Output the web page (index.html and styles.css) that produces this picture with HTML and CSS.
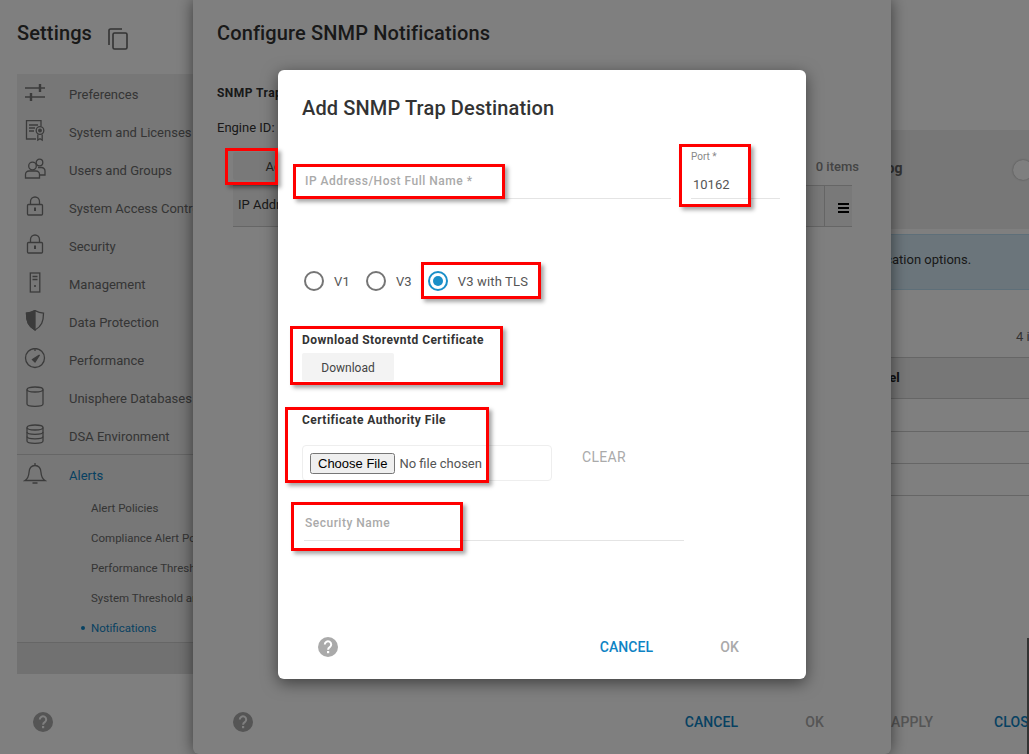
FILE: index.html
```html
<!DOCTYPE html>
<html>
<head>
	<meta charset="UTF-8">
	<title>Settings</title>
	<link rel="stylesheet" href="styles.css">
</head>
<body>
	<div class="page">
		<aside class="side">
			<div class="sideHead">
				<h1>Settings</h1>
				<svg class="copyIcon" viewBox="0 0 24 24" fill="none" stroke="currentColor" stroke-width="1.6"><path d="M3 19V4.5A1.5 1.5 0 0 1 4.500 3H16"/><rect x="7" y="7" width="14" height="16" rx="1.500"/></svg>
			</div>
			<nav class="sideNav">
				<div class="navRow">
					<svg class="navIcon" viewBox="0 0 24 24" fill="none" stroke="currentColor" stroke-width="1.300"><path d="M2 6h20M2 15h20"/><path d="M17 2v8M8 11v8" stroke-width="2.400"/></svg>
					<span>Preferences</span>
				</div>
				<div class="navRow">
					<svg class="navIcon" viewBox="0 0 24 24" fill="none" stroke="currentColor" stroke-width="1.300"><path d="M13 19H3.500V.700H18V6"/><path d="M6 5h9M6 8h6M6 11h5"/><circle cx="17" cy="10.500" r="3.800"/><circle cx="17" cy="10.500" r="1.300" fill="currentColor"/><path d="M14.800 14.500v5.500l2.200-1.300 2.200 1.300v-5.500"/></svg>
					<span>System and Licenses</span>
				</div>
				<div class="navRow">
					<svg class="navIcon" viewBox="0 0 24 24" fill="none" stroke="currentColor" stroke-width="1.300"><circle cx="9.500" cy="8" r="3.800"/><circle cx="16.500" cy="4.500" r="3.300"/><path d="M2.500 20v-3.500a3.500 3.500 0 0 1 3.500-3.500h7a3.500 3.500 0 0 1 3.500 3.500V20z"/><path d="M15 9.500h3.500a3.500 3.500 0 0 1 3.500 3.500v4h-5.500"/></svg>
					<span>Users and Groups</span>
				</div>
				<div class="navRow">
					<svg class="navIcon" viewBox="0 0 24 24" fill="none" stroke="currentColor" stroke-width="1.300"><rect x="4.500" y="8.500" width="15" height="10.500" rx="1"/><path d="M7.500 8.500V5.500a4.500 4.500 0 0 1 9 0V8.500"/><path d="M12 11.500v3.500" stroke-width="2"/></svg>
					<span>System Access Control</span>
				</div>
				<div class="navRow">
					<svg class="navIcon" viewBox="0 0 24 24" fill="none" stroke="currentColor" stroke-width="1.300"><rect x="4.500" y="8.500" width="15" height="10.500" rx="1"/><path d="M7.500 8.500V5.500a4.500 4.500 0 0 1 9 0V8.500"/><path d="M12 11.500v3.500" stroke-width="2"/></svg>
					<span>Security</span>
				</div>
				<div class="navRow">
					<svg class="navIcon" viewBox="0 0 24 24" fill="none" stroke="currentColor" stroke-width="1.300"><rect x="7.300" y="1" width="9.500" height="19"/><path d="M9.500 4.500h5M9.500 7.500h5"/><path d="M12 13v2" stroke-width="1.600"/></svg>
					<span>Management</span>
				</div>
				<div class="navRow">
					<svg class="navIcon" viewBox="0 0 24 24" fill="none" stroke="currentColor" stroke-width="1.300"><path d="M12 .7c3 1.500 6 2.300 8.500 2.500 0 8-1.800 13-8.500 16.800C5.300 16.200 3.500 11.200 3.500 3.200 6 3 9 2.200 12 .7z"/><path d="M12 .7C9 2.200 6 3 3.500 3.200c0 8 1.800 13 8.500 16.800z" fill="currentColor"/></svg>
					<span>Data Protection</span>
				</div>
				<div class="navRow">
					<svg class="navIcon" viewBox="0 0 24 24" fill="none" stroke="currentColor" stroke-width="1.300"><circle cx="12" cy="10" r="9.500"/><path d="M12 .5v2.500"/><path d="M9.500 11.500l7-4.500-4.500 7z" fill="currentColor"/></svg>
					<span>Performance</span>
				</div>
				<div class="navRow">
					<svg class="navIcon" viewBox="0 0 24 24" fill="none" stroke="currentColor" stroke-width="1.300"><path d="M4 3.500v14.500c0 1.300 3.600 2.300 8 2.300s8-1 8-2.300V3.500"/><ellipse cx="12" cy="3.500" rx="8" ry="2.500"/></svg>
					<span>Unisphere Databases</span>
				</div>
				<div class="navRow">
					<svg class="navIcon" viewBox="0 0 24 24" fill="none" stroke="currentColor" stroke-width="1.300"><path d="M4 3.500v13.500c0 1.300 3.600 2.300 8 2.300s8-1 8-2.300V3.500"/><ellipse cx="12" cy="3.500" rx="8" ry="2.500"/><path d="M4 8c0 1.300 3.600 2.300 8 2.300s8-1 8-2.300M4 12.500c0 1.300 3.600 2.300 8 2.300s8-1 8-2.300"/></svg>
					<span>DSA Environment</span>
				</div>
				<div class="navGroup">
					<div class="navRow alertsRow">
						<svg class="navIcon" viewBox="0 0 24 24" fill="none" stroke="currentColor" stroke-width="1.300"><path d="M2 17.500c3-1.800 3.700-4 4-8C6.300 5 8.500 2.500 12 2.500s5.700 2.500 6 7c.3 4 1 6.200 4 8z"/><path d="M12 2.500V0M9.500 20h5"/></svg>
						<span>Alerts</span>
					</div>
					<div class="subRow">Alert Policies</div>
					<div class="subRow">Compliance Alert Policies</div>
					<div class="subRow">Performance Thresholds and Alerts</div>
					<div class="subRow">System Threshold and Alerts</div>
					<div class="subRow subActive">Notifications</div>
				</div>
				<div class="navEnd"></div>
			</nav>
			<div class="sideFoot">
				<svg class="helpIcon" viewBox="0 0 20 20"><circle cx="10" cy="10" r="10" fill="currentColor"/><path d="M6.800 7.600a3.200 3.200 0 1 1 5 2.600c-1.200.8-1.700 1.300-1.700 2.500" fill="none" stroke="#fff" stroke-width="2"/><rect x="9" y="14" width="2.200" height="2.200" fill="#fff"/></svg>
			</div>
		</aside>

		<main class="main">
			<div class="logBand">
				<span>Log</span>
				<div class="toggleKnob"></div>
			</div>
			<div class="infoBand">notification options.</div>
			<div class="itemCount">4 items</div>
			<div class="bgTable">
				<div class="bgHead">Label</div>
				<div class="bgCell tall"></div>
				<div class="bgCell"></div>
				<div class="bgCell"></div>
			</div>
			<div class="mainFoot">
				<span class="btnText muted">APPLY</span>
				<span class="btnText primary">CLOSE</span>
			</div>
		</main>
	</div>

	<div class="edgeBar"></div>

	<div class="midDialog">
		<h2>Configure SNMP Notifications</h2>
		<div class="midSub">SNMP Trap Destinations</div>
		<div class="midEngine">Engine ID:</div>
		<div class="midTools">
			<button class="flatBtn addBtn">Add</button>
			<span class="midCount">0 items</span>
		</div>
		<div class="midTable">
			<div class="midCol">IP Address</div>
			<div class="midMenu">
				<svg viewBox="0 0 11 10" width="11" height="10"><path d="M0 1h11M0 5h11M0 9h11" stroke="#000" stroke-width="2"/></svg>
			</div>
		</div>
		<div class="midFoot">
			<svg class="helpIcon" viewBox="0 0 20 20"><circle cx="10" cy="10" r="10" fill="currentColor"/><path d="M6.800 7.600a3.200 3.200 0 1 1 5 2.600c-1.200.8-1.700 1.300-1.700 2.500" fill="none" stroke="#fff" stroke-width="2"/><rect x="9" y="14" width="2.200" height="2.200" fill="#fff"/></svg>
			<span class="btnText primary pushRight">CANCEL</span>
			<span class="btnText muted">OK</span>
		</div>
	</div>

	<div class="overlay"></div>

	<div class="topDialog">
		<h2>Add SNMP Trap Destination</h2>
		<div class="fieldRow">
			<div class="field hostField"><span class="hint">IP Address/Host Full Name *</span></div>
			<div class="field portField">
				<span class="portLabel">Port *</span>
				<span class="portValue">10162</span>
			</div>
		</div>
		<div class="radioRow">
			<span class="radio"></span><span class="radioText">V1</span>
			<span class="radio"></span><span class="radioText">V3</span>
			<span class="radio checked"></span><span class="radioText">V3 with TLS</span>
		</div>
		<div class="groupLabel downloadLabel">Download Storevntd Certificate</div>
		<button class="flatBtn downloadBtn">Download</button>
		<div class="groupLabel caLabel">Certificate Authority File</div>
		<div class="fileRow">
			<div class="fileBox"><input type="file"></div>
			<span class="btnText muted clearBtn">CLEAR</span>
		</div>
		<div class="field securityField"><span class="hint">Security Name</span></div>
		<div class="topFoot">
			<svg class="helpIcon" viewBox="0 0 20 20"><circle cx="10" cy="10" r="10" fill="currentColor"/><path d="M6.800 7.600a3.200 3.200 0 1 1 5 2.600c-1.200.8-1.700 1.300-1.700 2.500" fill="none" stroke="#fff" stroke-width="2"/><rect x="9" y="14" width="2.200" height="2.200" fill="#fff"/></svg>
			<span class="btnText primary pushRight">CANCEL</span>
			<span class="btnText muted">OK</span>
		</div>
	</div>

	<!-- red annotation boxes drawn over the screenshot -->
	<div class="mark markAdd"></div>
	<div class="mark markHost"></div>
	<div class="mark markPort"></div>
	<div class="mark markTls"></div>
	<div class="mark markDownload"></div>
	<div class="mark markCa"></div>
	<div class="mark markSecurity"></div>
</body>
</html>
```

FILE: styles.css
```css
html, body {
	margin: 0;
	height: 754px;
	overflow: hidden;
}
body {
	position: relative;
	width: 1029px;
	background-color: #fff;
	color: #333;
	font-family: Roboto, "Liberation Sans", sans-serif;
	font-size: 13px;
}
h1, h2 {
	margin: 0;
	font-size: 20px;
	font-weight: 500;
	line-height: 24px;
	letter-spacing: .13px;
}
.page {
	display: flex;
	height: 754px;
}

/* left side */
.side {
	display: flex;
	flex-direction: column;
	flex: none;
	width: 176px;
	margin-left: 17px;
	white-space: nowrap;
}
.sideHead {
	display: flex;
	height: 74px;
	padding-top: 21px;
	box-sizing: border-box;
}
.copyIcon {
	width: 24px;
	height: 24px;
	margin: 5px 0 0 14px;
	color: #666;
}
.sideNav {
	background-color: #eee;
	color: #6a6a6a;
}
.navRow {
	display: flex;
	align-items: center;
	height: 38px;
}
.navRow:first-child {
	margin-top: 1px;
}
.navIcon {
	flex: none;
	width: 24px;
	height: 24px;
	margin: 0 22px 0 6px;
	color: #777;
}
.navGroup {
	height: 189px;
	margin-top: -1px;
	box-sizing: border-box;
	border-top: 1px solid #ccc;
	border-bottom: 1px solid #ccc;
}
.alertsRow {
	height: 40px;
	color: #0e83c4;
}
.alertsRow:first-child {
	margin-top: 0;
}
.subRow {
	position: relative;
	height: 30px;
	line-height: 26px;
	padding-left: 74px;
	font-size: 11.5px;
}
.subActive {
	color: #0e83c4;
}
.subActive::before {
	content: "";
	position: absolute;
	left: 64px;
	top: 11px;
	width: 4px;
	height: 4px;
	border-radius: 50%;
	background-color: #0e83c4;
}
.navEnd {
	height: 31px;
	background-color: #e2e2e2;
}
.sideFoot {
	margin-top: auto;
	height: 42px;
	padding-left: 16px;
}
.helpIcon {
	display: block;
	flex: none;
	width: 20px;
	height: 20px;
	color: #aaa;
}

/* page behind the dialogs */
.main {
	display: flex;
	flex-direction: column;
	flex: 1;
	min-width: 0;
	padding-top: 130px;
	white-space: nowrap;
	overflow: hidden;
}
.logBand {
	display: flex;
	align-items: center;
	justify-content: space-between;
	height: 99px;
	padding-left: 686px;
	padding-bottom: 24px;
	box-sizing: border-box;
	background-color: #eee;
	font-size: 14px;
	font-weight: 700;
	color: #666;
}
.toggleKnob {
	width: 20px;
	height: 20px;
	margin: 5px -4px 0 0;
	border-radius: 50%;
	background-color: #fff;
	box-shadow: 0 0 2px rgba(0, 0, 0, .4);
}
.infoBand {
	height: 56px;
	margin-top: 5px;
	padding-left: 663px;
	line-height: 50px;
	box-sizing: border-box;
	background-color: #d6ebf7;
	border-top: 1px solid #bcdff2;
	border-bottom: 1px solid #bcdff2;
}
.itemCount {
	height: 67px;
	padding: 39px 0 0 823px;
	box-sizing: border-box;
	color: #666;
}
.bgTable {
	border-top: 1px solid #ccc;
}
.bgHead {
	height: 40px;
	line-height: 39px;
	padding-left: 675px;
	background-color: #eee;
	font-weight: 700;
	color: #222;
	border-bottom: 1px solid #ccc;
}
.bgCell {
	height: 31px;
	border-bottom: 1px solid #ccc;
}
.bgCell.tall {
	height: 32px;
}
.mainFoot {
	display: flex;
	gap: 61px;
	margin-top: auto;
	height: 42px;
	padding-left: 698px;
}
.btnText {
	font-size: 14px;
	font-weight: 500;
	line-height: 20px;
	letter-spacing: .1px;
}
.primary {
	color: #0e83c4;
}
.muted {
	color: #aaa;
}
.edgeBar {
	position: absolute;
	right: 0;
	top: 638px;
	width: 2px;
	height: 116px;
	background-color: #333;
	z-index: 2;
}

/* first dialog */
.midDialog {
	position: absolute;
	left: 193px;
	top: 0;
	display: flex;
	flex-direction: column;
	width: 698px;
	height: 754px;
	box-sizing: border-box;
	padding: 21px 67px 0 24px;
	background-color: #fff;
	border-radius: 0 0 6px 6px;
	box-shadow: 0 0 16px rgba(0, 0, 0, .55);
	white-space: nowrap;
}
.midSub {
	margin-top: 40px;
	font-size: 12px;
	font-weight: 700;
	line-height: 16px;
	letter-spacing: .45px;
}
.midEngine {
	margin-top: 19px;
	line-height: 16px;
}
.midTools {
	display: flex;
	justify-content: space-between;
	align-items: center;
	height: 28px;
	margin: 16px -35px 5px 16px;
}
.midCount {
	color: #888;
	font-weight: 500;
}
.flatBtn {
	width: 92px;
	height: 28px;
	padding: 1px 0 0;
	border: 0;
	border-radius: 2px;
	background-color: #f3f3f3;
	color: #444;
	font-family: inherit;
	font-size: 12px;
}
.addBtn {
	padding-right: 4px;
	font-size: 13px;
}
.midTable {
	display: flex;
	justify-content: space-between;
	height: 42px;
	margin: 0 -28px 0 16px;
	box-sizing: border-box;
	background-color: #f3f3f3;
	border-top: 1px solid #ccc;
	border-bottom: 1px solid #ccc;
}
.midCol {
	padding-left: 5px;
	line-height: 38px;
}
.midMenu {
	display: flex;
	align-items: center;
	width: 28px;
	padding: 3px 0 0 13px;
	box-sizing: border-box;
	border-left: 1px solid #ccc;
}
.midFoot {
	display: flex;
	gap: 67px;
	margin-top: auto;
	height: 42px;
	padding-left: 16px;
}
.pushRight {
	margin-left: auto;
}
.overlay {
	position: absolute;
	left: 0;
	top: 0;
	width: 100%;
	height: 100%;
	background-color: rgba(0, 0, 0, .5);
}

/* top dialog */
.topDialog {
	position: absolute;
	left: 278px;
	top: 70px;
	display: flex;
	flex-direction: column;
	width: 528px;
	height: 609px;
	box-sizing: border-box;
	padding: 26px 24px 0;
	background-color: #fff;
	border-radius: 6px;
	box-shadow: 0 4px 16px rgba(0, 0, 0, .5);
}
.fieldRow {
	display: flex;
	gap: 20px;
	margin-top: 30px;
}
.field {
	display: flex;
	flex-direction: column;
	justify-content: flex-end;
	height: 49px;
	box-sizing: border-box;
	border-bottom: 1px solid #e4e4e4;
}
.hostField {
	width: 369px;
	padding: 0 0 9px 3px;
}
.portField {
	width: 89px;
	justify-content: space-between;
	padding: 1px 0 5px;
}
.hint {
	color: #aaa;
	font-size: 12px;
	font-weight: 500;
	line-height: 16px;
	letter-spacing: .5px;
}
.portLabel {
	color: #888;
	font-size: 10px;
	line-height: 12px;
}
.portValue {
	padding-left: 2px;
	color: #555;
	line-height: 16px;
}
.radioRow {
	display: flex;
	align-items: center;
	height: 20px;
	margin-top: 72px;
	padding-left: 2px;
	color: #555;
}
.radio {
	flex: none;
	position: relative;
	width: 20px;
	height: 20px;
	box-sizing: border-box;
	border: 2px solid #757575;
	border-radius: 50%;
	margin-right: 10px;
}
.radio.checked {
	border-color: #1a8fc8;
}
.radio.checked::after {
	content: "";
	position: absolute;
	left: 3px;
	top: 3px;
	width: 10px;
	height: 10px;
	border-radius: 50%;
	background-color: #1a8fc8;
}
.radioText {
	margin-right: 16px;
	letter-spacing: .15px;
}
.groupLabel {
	font-size: 12px;
	font-weight: 700;
	line-height: 16px;
	letter-spacing: .45px;
}
.downloadLabel {
	margin-top: 41px;
}
.downloadBtn {
	margin-top: 5px;
}
.caLabel {
	margin-top: 31px;
}
.fileRow {
	display: flex;
	align-items: center;
	gap: 30px;
	margin-top: 17px;
}
.fileBox {
	display: flex;
	align-items: center;
	width: 250px;
	height: 36px;
	box-sizing: border-box;
	padding-left: 7px;
	border: 1px solid #eee;
	border-radius: 4px;
}
.fileBox input {
	width: 230px;
	color: #555;
	font-family: inherit;
	font-size: 13px;
}
.clearBtn {
	padding-bottom: 12px;
	font-weight: 400;
	letter-spacing: .3px;
}
.securityField {
	width: 380px;
	height: 27px;
	margin: 33px 0 0 2px;
	padding: 0 0 9px 1px;
}
.topFoot {
	display: flex;
	gap: 67px;
	align-items: center;
	height: 22px;
	margin: auto 43px 21px 16px;
}

/* red annotations */
.mark {
	position: absolute;
	box-sizing: border-box;
	border: 3px solid #f00;
	box-shadow: 3px 3px 4px rgba(0, 0, 0, .35);
}
.markAdd {
	left: 225px;
	top: 148px;
	width: 53px;
	height: 37px;
}
.markHost {
	left: 293px;
	top: 164px;
	width: 212px;
	height: 35px;
}
.markPort {
	left: 679px;
	top: 144px;
	width: 72px;
	height: 63px;
}
.markTls {
	left: 421px;
	top: 262px;
	width: 120px;
	height: 37px;
}
.markDownload {
	left: 290px;
	top: 326px;
	width: 213px;
	height: 59px;
}
.markCa {
	left: 285px;
	top: 407px;
	width: 204px;
	height: 76px;
}
.markSecurity {
	left: 291px;
	top: 502px;
	width: 172px;
	height: 49px;
}
```
